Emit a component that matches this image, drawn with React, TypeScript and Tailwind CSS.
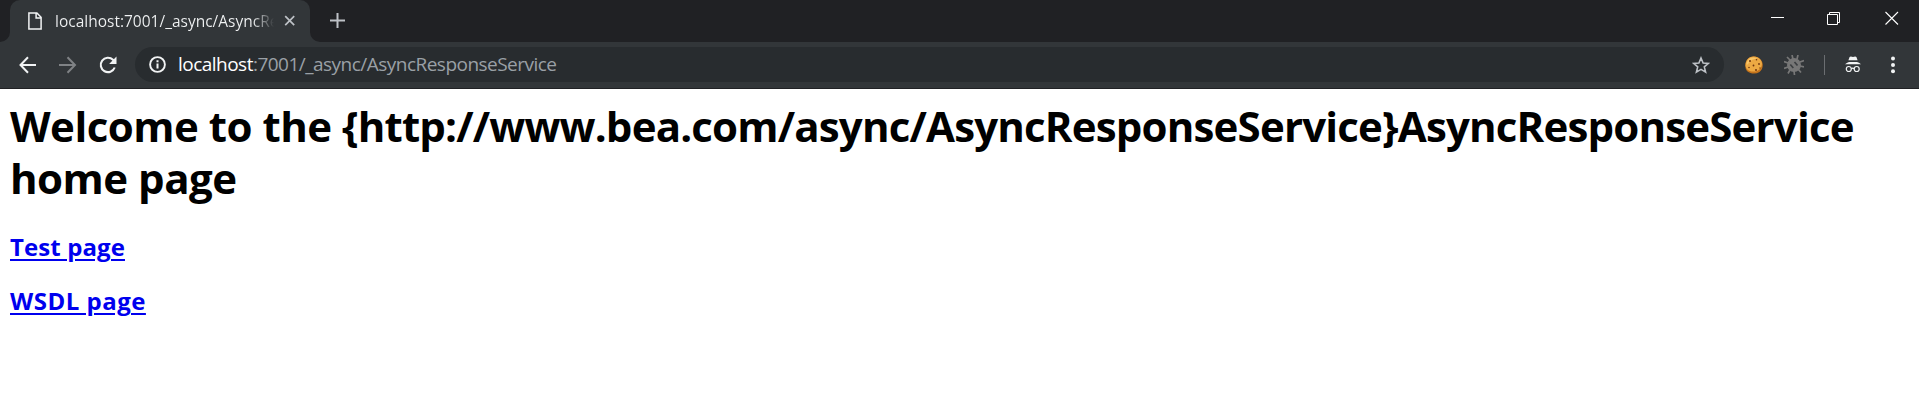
import type { ReactNode } from "react";

function Icon({ w, h, children, className = "" }: { w: number; h: number; children: ReactNode; className?: string }) {
  return (
    <svg width={w} height={h} viewBox={`0 0 ${w} ${h}`} fill="none" className={`block shrink-0 ${className}`}>
      {children}
    </svg>
  );
}

function TabStrip() {
  return (
    <div className="flex h-[42px] items-start bg-[#202124]">
      <div className="relative ml-[10px] flex h-[42px] w-[300px] items-center rounded-t-[10px] bg-[#323639] pl-[18px]">
        <Icon w={10} h={10} className="absolute bottom-0 -left-[10px]">
          <path d="M10 0v10H0A10 10 0 0 0 10 0z" fill="#323639" />
        </Icon>
        <Icon w={10} h={10} className="absolute -right-[10px] bottom-0">
          <path d="M0 0v10h10A10 10 0 0 1 0 0z" fill="#323639" />
        </Icon>
        <Icon w={14} h={18}>
          <path d="M.9.9h8l4.2 4.3v11.9H.9zM8.1 1v5h5" stroke="#f1f3f4" strokeWidth="1.5" />
        </Icon>
        <div className="ml-[13px] w-[219px] overflow-hidden whitespace-nowrap bg-gradient-to-r from-[#f1f3f4] from-[90%] to-transparent bg-clip-text text-[15.5px] leading-[22px] text-transparent">
          localhost:7001/_async/AsyncResponseService
        </div>
        <Icon w={12} h={12} className="ml-[10px]">
          <path d="M1.2 1.2l9 9M10.2 1.2l-9 9" stroke="#bdc1c6" strokeWidth="1.7" />
        </Icon>
      </div>
      <Icon w={16} h={16} className="mt-[13px] ml-[20px]">
        <path d="M7.5 0v15M0 7.5h15" stroke="#bdc1c6" strokeWidth="2" />
      </Icon>
      <div className="ml-auto flex pt-[11px] pr-[20px]">
        <Icon w={14} h={14}>
          <path d="M0 6.5h13" stroke="#fff" />
        </Icon>
        <Icon w={14} h={14} className="ml-[42px]">
          <path d="M.5 3.5h10v10H.5zM2.500 3V1.500h10v10H11" stroke="#fff" />
        </Icon>
        <Icon w={14} h={14} className="ml-[44px]">
          <path d="M.5 1l12.500 12.500M13 1L.5 13.500" stroke="#fff" strokeWidth="1.1" />
        </Icon>
      </div>
    </div>
  );
}

function Toolbar() {
  return (
    <div className="flex h-[47px] items-start border-b border-[#202124] bg-[#323639] pt-[5px]">
      <Icon w={18} h={18} className="mt-[9px] ml-[19px]">
        <path d="M17 9H1.800M9 1.300L1.500 9 9 16.700" stroke="#f1f3f4" strokeWidth="2" />
      </Icon>
      <Icon w={18} h={18} className="mt-[9px] ml-[22px]">
        <path d="M0 9h15.500M8.500 1.300L16 9l-7.500 7.700" stroke="#7f8285" strokeWidth="2" />
      </Icon>
      <Icon w={18} h={18} className="mt-[9px] ml-[22px]">
        <path d="M15.700 11.500A7.200 7.200 0 1 1 14 3.800L16 6" stroke="#f1f3f4" strokeWidth="2.100" />
        <path d="M17.500 .5v7.400h-7.400z" fill="#f1f3f4" />
      </Icon>
      <div className="ml-[18px] flex h-[35px] w-[1589px] items-center rounded-full bg-[#282c2f] pr-[14px] pl-[14px]">
        <Icon w={17} h={17}>
          <circle cx="8.500" cy="8.500" r="7.400" stroke="#f1f3f4" strokeWidth="1.900" />
          <path d="M8.500 7.500v5M8.500 4.300v2" stroke="#f1f3f4" strokeWidth="2" />
        </Icon>
        <div className="ml-[12px] text-[19px] leading-[29px] tracking-[-0.520px] whitespace-nowrap text-[#9aa0a6]">
          <span className="text-white">localhost</span>:7001/_async/AsyncResponseService
        </div>
        <Icon w={18} h={18} className="ml-auto">
          <path
            d="M9 2l2.100 5 5.300.4-4.100 3.500 1.300 5.200L9 13.400l-4.600 2.700 1.300-5.200L1.600 7.400 6.900 7z"
            stroke="#bdc1c6"
            strokeWidth="1.600"
          />
        </Icon>
      </div>
      <Icon w={18} h={18} className="mt-[9px] ml-[21px]">
        <path d="M5 1.200Q9-.3 13 1.400q4 2 4.700 6.500.4 5-3.200 8-4 2.600-9 1.100Q.5 15.500.3 10 0 4 5 1.200z" fill="#c4731b" />
        <path d="M5 1.200Q9-.3 13 1.400q3.500 2 4 6-.2 5-4 7-4 2.200-9 .3Q.8 13 .5 9.500.500 4 5 1.200z" fill="#eda943" />
        <path d="M5 2.200q4-1.500 7 .5-5 0-8 4-1 2-2.500 2Q1.500 4.500 5 2.200z" fill="#f8c568" />
        <g fill="#70350e">
          <circle cx="5" cy="5" r="1" />
          <circle cx="11.500" cy="3.800" r=".8" />
          <circle cx="8.500" cy="9.500" r=".9" />
          <circle cx="4" cy="11.500" r=".8" />
          <circle cx="14" cy="8" r=".9" />
          <circle cx="11" cy="14" r="1" />
          <circle cx="15" cy="12" r=".7" />
        </g>
      </Icon>
      <Icon w={20} h={20} className="mt-[8px] ml-[21px]">
        <circle cx="10" cy="10" r="7" fill="#777" />
        <path
          d="M9 4L8 0M13 4l1-4M16 7l4-1.500M16 11l4 1M14 14l3 3.500M10 16l.500 4M6 15l-2 3.500M4 12l-4 1.500M4 8L0 6.500M6 5L3 2"
          stroke="#777"
          strokeWidth="1.700"
        />
        <path d="M6.300 9.500l3 3.500M10.500 7l3 3.500" stroke="#3c3f42" strokeWidth="1.700" />
      </Icon>
      <div className="mt-[8px] ml-[20px] h-[20px] w-px bg-[#6b6e71]" />
      <Icon w={18} h={18} className="mt-[9px] ml-[19px]">
        <path d="M5.600 1l1.200-.5 2.200.4 2.200-.4 1.200.5 1.200 3.200H4.400zM1 8.200Q3.500 6.500 5 6h8q2 .5 4 2.200z" fill="#f1f3f4" />
        <circle cx="4.800" cy="13" r="2.500" stroke="#f1f3f4" strokeWidth="1.200" />
        <circle cx="12.700" cy="13" r="2.500" stroke="#f1f3f4" strokeWidth="1.200" />
        <path d="M7.300 12.800q1.500-1.200 3 0" stroke="#f1f3f4" strokeWidth="1.200" />
      </Icon>
      <Icon w={4} h={18} className="mt-[9px] ml-[29px]">
        <circle cx="2" cy="2.500" r="2" fill="#f1f3f4" />
        <circle cx="2" cy="9" r="2" fill="#f1f3f4" />
        <circle cx="2" cy="15.300" r="2" fill="#f1f3f4" />
      </Icon>
    </div>
  );
}

export default function App() {
  return (
    <div className="h-[407px] w-[1919px] overflow-hidden bg-white font-['Open_Sans','Noto_Sans',sans-serif]">
      <TabStrip />
      <Toolbar />
      <main className="pt-[11px] pl-[10px]">
        <h1 className="text-[42px] leading-[52px] font-bold tracking-[-0.82px] whitespace-nowrap text-black">
          <span className="tracking-[-0.5px]">Welcome to the </span>
          {"{http://www.bea.com/async/AsyncResponseService}"}AsyncResponseService
          <br />
          <span className="tracking-[-0.5px]">home page</span>
        </h1>
        <h2 className="mt-[27px] text-[24px] leading-[32px] font-bold tracking-[0.1px]">
          <a className="text-[#0000ee] underline decoration-2 underline-offset-[3px]">Test page</a>
        </h2>
        <h2 className="mt-[22px] text-[24px] leading-[32px] font-bold tracking-[0.5px]">
          <a className="text-[#0000ee] underline decoration-2 underline-offset-[3px]">WSDL page</a>
        </h2>
      </main>
    </div>
  );
}
